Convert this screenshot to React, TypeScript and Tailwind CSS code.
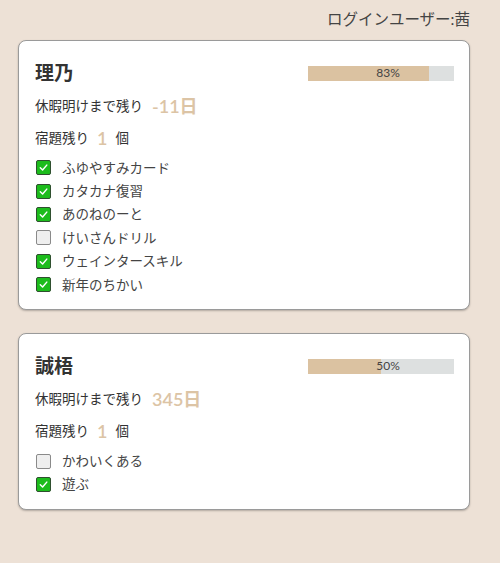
import React from "react";

type Kid = {
  name: string;
  progress: number;
  daysLeft: number;
  tasksLeft: number;
  tasks: { label: string; done: boolean }[];
};

const kids: Kid[] = [
  {
    name: "理乃",
    progress: 83,
    daysLeft: -11,
    tasksLeft: 1,
    tasks: [
      { label: "ふゆやすみカード", done: true },
      { label: "カタカナ復習", done: true },
      { label: "あのねのーと", done: true },
      { label: "けいさんドリル", done: false },
      { label: "ウェインタースキル", done: true },
      { label: "新年のちかい", done: true },
    ],
  },
  {
    name: "誠梧",
    progress: 50,
    daysLeft: 345,
    tasksLeft: 1,
    tasks: [
      { label: "かわいくある", done: false },
      { label: "遊ぶ", done: true },
    ],
  },
];

function Check({ done }: { done: boolean }) {
  if (!done) {
    return (
      <span className="w-[15px] h-[15px] border border-[#8a8a8a] bg-[#efefef] rounded-[2px] shrink-0" />
    );
  }
  return (
    <span className="w-[15px] h-[15px] border border-[#2f4f2f] bg-[#1cbc1c] rounded-[2px] shrink-0 flex items-center justify-center">
      <svg width="11" height="11" viewBox="0 0 12 12">
        <path
          d="M2.5 6.3 L5 8.7 L9.6 3.4"
          fill="none"
          stroke="white"
          strokeWidth="1.6"
          strokeLinecap="round"
          strokeLinejoin="round"
        />
      </svg>
    </span>
  );
}

function KidCard({ kid }: { kid: Kid }) {
  return (
    <div className="bg-white border-[1.5px] border-[#9a9a9a] rounded-[8px] shadow-[0_1px_2px_rgba(0,0,0,0.25)] pl-[16px] pr-[15px] pt-[18px] pb-[13px]">
      {/* name + progress */}
      <div className="flex items-center justify-between h-[28px]">
        <h2 className="text-[19px] font-bold text-[#333]">{kid.name}</h2>
        <div className="relative w-[146px] h-[15px] bg-[#dde0e0]">
          <div
            className="h-full bg-[#dbc2a1]"
            style={{ width: `${kid.progress}%` }}
          ></div>
          <span className="absolute inset-0 flex items-center justify-center pl-[14px] text-[12px] text-[#444]">
            {kid.progress}%
          </span>
        </div>
      </div>

      <div className="flex items-center h-[32px] mt-[3px] text-[13.5px] text-[#333]">
        <span>休暇明けまで残り</span>
        <span className="ml-[9px] text-[18px] font-semibold text-[#dcc4a5]">
          {kid.daysLeft}日
        </span>
      </div>

      <div className="flex items-center h-[32px] text-[13.5px] text-[#333]">
        <span>宿題残り</span>
        <span className="mx-[8px] text-[18px] font-semibold text-[#dcc4a5]">
          {kid.tasksLeft}
        </span>
        <span>個</span>
      </div>

      {/* task list */}
      <ul className="mt-[2px] pl-[1px]">
        {kid.tasks.map((t, i) => (
          <li key={i} className="flex items-center gap-[11px] h-[23.4px] text-[13.5px] text-[#444]">
            <Check done={t.done} />
            <span>{t.label}</span>
          </li>
        ))}
      </ul>
    </div>
  );
}

export default function App() {
  return (
    <div
      className="w-[500px] h-[563px] bg-[#ede1d6] pl-[18px] pr-[30px]"
      style={{ fontFamily: 'Lato, "Noto Sans CJK JP", sans-serif' }}
    >
      <div className="h-[40px] flex items-center justify-end text-[15.5px] text-[#444]">
        ログインユーザー:茜
      </div>
      <div className="flex flex-col gap-[23px]">
        {kids.map((k) => (
          <KidCard key={k.name} kid={k} />
        ))}
      </div>
    </div>
  );
}
